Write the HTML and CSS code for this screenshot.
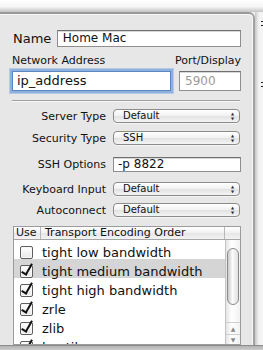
FILE: index.html
```html
<!DOCTYPE html>
<html>
<head>
	<meta charset="UTF-8"/>
	<title>Connection</title>
	<link rel="stylesheet" href="styles.css">
</head>
<body>

<div class="top-shade"></div>

<div class="main">
	<div class="panel">

		<!-- name -->
		<div class="row name-row">
			<span class="label big">Name</span>
			<div class="field name-field">Home Mac</div>
		</div>

		<!-- address / port -->
		<div class="row caption-row">
			<span class="label">Network Address</span>
			<span class="label">Port/Display</span>
		</div>
		<div class="row address-row">
			<div class="field address-field focused">ip_address</div>
			<div class="field port-field">5900</div>
		</div>

		<div class="separator"></div>

		<!-- options -->
		<div class="row opt-row server-row">
			<span class="label opt-label">Server Type</span>
			<div class="popup">Default<span class="arrows">&#9650;<br>&#9660;</span></div>
		</div>
		<div class="row opt-row security-row">
			<span class="label opt-label">Security Type</span>
			<div class="popup">SSH<span class="arrows">&#9650;<br>&#9660;</span></div>
		</div>
		<div class="row opt-row ssh-row">
			<span class="label opt-label">SSH Options</span>
			<div class="field ssh-field">-p 8822</div>
		</div>
		<div class="row opt-row keyboard-row">
			<span class="label opt-label">Keyboard Input</span>
			<div class="popup">Default<span class="arrows">&#9650;<br>&#9660;</span></div>
		</div>
		<div class="row opt-row auto-row">
			<span class="label opt-label">Autoconnect</span>
			<div class="popup">Default<span class="arrows">&#9650;<br>&#9660;</span></div>
		</div>

		<!-- encodings -->
		<div class="table">
			<div class="thead">
				<div class="th th-use">Use</div>
				<div class="th th-name">Transport Encoding Order</div>
				<div class="th th-end"></div>
			</div>
			<div class="tbody">
				<div class="rows">
					<div class="tr"><span class="check"></span><span class="enc">tight low bandwidth</span></div>
					<div class="tr selected"><span class="check on"></span><span class="enc">tight medium bandwidth</span></div>
					<div class="tr"><span class="check on"></span><span class="enc">tight high bandwidth</span></div>
					<div class="tr"><span class="check on"></span><span class="enc">zrle</span></div>
					<div class="tr"><span class="check on"></span><span class="enc">zlib</span></div>
					<div class="tr"><span class="check on"></span><span class="enc">hextile</span></div>
				</div>
				<div class="scrollbar">
					<div class="thumb"></div>
					<div class="sb-arrows">
						<span class="sb-up">&#9650;</span>
						<span class="sb-down">&#9660;</span>
					</div>
				</div>
			</div>
		</div>

	</div>

	<div class="aside">
		<span class="mark mark-1"></span>
		<span class="mark mark-2"></span>
	</div>
</div>

<div class="bottom-bar"></div>

</body>
</html>
```

FILE: styles.css
```css
html, body {
	margin: 0;
	padding: 0;
	height: 350px;
	overflow: hidden;
	background: #f4f4f4;
	font-family: "DejaVu Sans", sans-serif;
	color: #111;
}

/* strip above the sheet */
.top-shade {
	height: 12px;
	background: linear-gradient(#ffffff 0%, #f6f6f6 55%, #c4c4c4 100%);
}

.main {
	display: flex;
	height: 333px;
}

.panel {
	box-sizing: border-box;
	height: 333px;
	padding: 16px 0 0 12px;
	background: #e7e7e7;
	border-top: 2px solid #9a9a9a;
	border-right: 2px solid #a2a2a2;
	border-top-right-radius: 6px;
	box-shadow: inset -1px 1px 0 #f6f6f6;
	flex: 0 0 255px;
	overflow: hidden;
}

.aside {
	flex: 1;
	display: flex;
	flex-direction: column;
	align-items: flex-end;
	background: linear-gradient(90deg, #c8c8c8, #f4f4f4 4px);
}

.mark {
	display: block;
	width: 2px;
	height: 3px;
	border-top: 1px solid #222;
	border-bottom: 1px solid #222;
}

.mark-1 { margin-top: 9px; }
.mark-2 { margin-top: 56px; }

.bottom-bar {
	height: 5px;
	border-top: 1px solid #8c8c8c;
	background: linear-gradient(#b4b4b4, #d0d0d0);
}

/* rows */
.row {
	display: flex;
	align-items: center;
	width: 229px;
}

.label {
	font-size: 11px;
	white-space: nowrap;
}

.label.big {
	font-size: 13px;
	width: 44px;
	padding-left: 1px;
}

.field {
	box-sizing: border-box;
	background: #fff;
	border: 1px solid #8e8e8e;
	border-top-color: #6f6f6f;
	box-shadow: inset 0 1px 0 #d8d8d8;
	font-size: 12px;
	padding-left: 5px;
	white-space: nowrap;
}

.name-row {
	height: 17px;
}

.name-field {
	width: 185px;
	height: 17px;
	line-height: 15px;
}

.caption-row {
	margin-top: 7px;
	height: 13px;
	justify-content: space-between;
}

.address-row {
	margin-top: 4px;
	justify-content: space-between;
}

.address-field {
	width: 159px;
	height: 20px;
	line-height: 18px;
	font-size: 13px;
	padding-left: 4px;
}

.focused {
	border-color: #5b87c4;
	box-shadow: 0 0 0 2px #8db0dd, 0 0 0 3px #b7cbe6;
}

.port-field {
	width: 62px;
	height: 20px;
	line-height: 18px;
	color: #9a9a9a;
	font-size: 12px;
}

.separator {
	width: 228px;
	margin-top: 9px;
	border-top: 1px solid #9e9e9e;
	border-bottom: 1px solid #f8f8f8;
}

.opt-label {
	width: 94px;
	text-align: right;
	margin-right: 7px;
	font-size: 11px;
}

.popup {
	position: relative;
	box-sizing: border-box;
	width: 127px;
	height: 14px;
	border: 1px solid #8b8b8b;
	border-radius: 4px;
	background: linear-gradient(#ffffff, #f1f1f1 50%, #e2e2e2 51%, #f4f4f4);
	font-size: 10px;
	line-height: 12px;
	padding-left: 9px;
	box-shadow: 0 1px 0 #f5f5f5;
}

.arrows {
	position: absolute;
	right: 5px;
	top: 1px;
	font-size: 4px;
	line-height: 5px;
	color: #333;
}

.server-row { margin-top: 7px; }
.security-row { margin-top: 8px; }
.ssh-row { margin-top: 12px; }
.keyboard-row { margin-top: 10px; }
.auto-row { margin-top: 7px; }

.ssh-field {
	width: 128px;
	height: 15px;
	line-height: 13px;
	font-size: 12px;
	padding-left: 4px;
}

/* table */
.table {
	margin-top: 9px;
	margin-left: 1px;
	width: 228px;
	height: 119px;
	box-sizing: border-box;
	border: 1px solid #9c9c9c;
	background: #fff;
	display: flex;
	flex-direction: column;
	overflow: hidden;
}

.thead {
	display: flex;
	height: 12px;
	flex: 0 0 12px;
	border-bottom: 1px solid #a6a6a6;
	background: linear-gradient(#ffffff, #f0f0f0 50%, #e6e6e6 51%, #f3f3f3);
	font-size: 11px;
	line-height: 12px;
}

.th {
	box-sizing: border-box;
	padding-left: 2px;
	border-right: 1px solid #b8b8b8;
	white-space: nowrap;
}

.th-use { width: 27px; }
.th-name { width: 184px; padding-left: 4px; }
.th-end { flex: 1; border-right: none; }

.tbody {
	flex: 1;
	display: flex;
	overflow: hidden;
}

.rows {
	flex: 1;
}

.tr {
	display: flex;
	height: 19px;
	font-size: 13px;
	line-height: 13px;
	white-space: nowrap;
}

.tr.selected {
	background: #d5d5d5;
}

.check {
	position: relative;
	box-sizing: border-box;
	width: 13px;
	height: 13px;
	margin: 6px 9px 0 6px;
	border: 1px solid #5e5e5e;
	border-radius: 2px;
	background: linear-gradient(#ffffff, #e6e6e6);
	box-shadow: inset 0 0 0 1px #f8f8f8;
}

.check.on::after {
	content: "";
	position: absolute;
	left: 3px;
	top: -4px;
	width: 4px;
	height: 11px;
	border-right: 2px solid #111;
	border-bottom: 2px solid #111;
	transform: rotate(30deg);
}

.enc {
	padding-top: 6px;
}

.scrollbar {
	width: 15px;
	box-sizing: border-box;
	border-left: 1px solid #c4c4c4;
	background: linear-gradient(90deg, #e4e4e4, #ffffff 40%, #f2f2f2);
	display: flex;
	flex-direction: column;
}

.thumb {
	margin: 8px 1px 0 1px;
	height: 55px;
	border: 1px solid #8c8c8c;
	border-radius: 7px;
	background: linear-gradient(90deg, #c9c9c9, #fbfbfb 45%, #e0e0e0);
}

.sb-arrows {
	margin-top: auto;
	display: flex;
	flex-direction: column;
	align-items: center;
	font-size: 6px;
	line-height: 9px;
	color: #8a8a8a;
	border-top: 1px solid #cfcfcf;
}

.sb-up {
	border-bottom: 1px solid #cfcfcf;
	width: 100%;
	text-align: center;
	height: 11px;
	line-height: 12px;
}
```
